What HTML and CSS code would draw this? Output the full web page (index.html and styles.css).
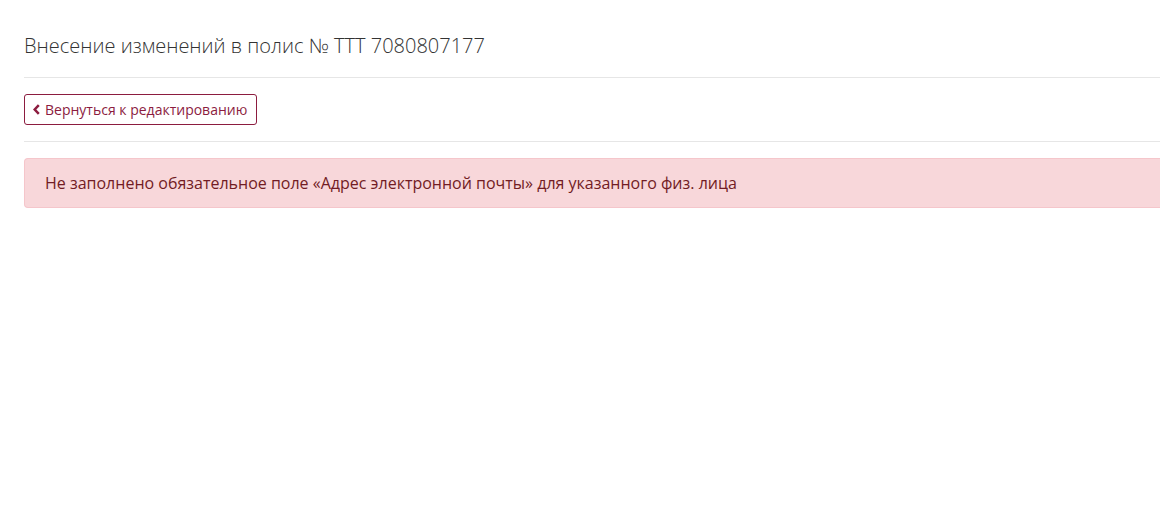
FILE: index.html
```html
<!DOCTYPE html>
<html lang="ru">
<head>
<meta charset="utf-8">
<title>Внесение изменений</title>
<link rel="stylesheet" href="styles.css">
</head>
<body>
<div class="page">
  <h1 class="title">Внесение изменений в полис № ТТТ 7080807177</h1>
  <div class="toolbar">
    <a class="btn-back" href="#">
      <svg class="chev" width="7" height="11" viewBox="0 0 7 11" aria-hidden="true"><path d="M5.8 1.2 L1.7 5.5 L5.8 9.8" fill="none" stroke="currentColor" stroke-width="2.5"/></svg>
      Вернуться к редактированию
    </a>
  </div>
  <div class="alert">Не заполнено обязательное поле «Адрес электронной почты» для указанного физ. лица</div>
</div>
</body>
</html>
```
FILE: styles.css
```css
html, body {
  margin: 0;
  padding: 0;
  background: #fff;
}
body {
  font-family: "Open Sans", "Liberation Sans", sans-serif;
  color: #333;
}
.page {
  padding: 0 0 0 24px;
}
.title {
  margin: 0;
  padding: 32px 0 0;
  height: 45px;
  font-size: 20px;
  font-weight: 300;
  line-height: 28px;
  color: #333;
  border-bottom: 1px solid #e6e6e6;
}
.toolbar {
  padding: 16px 0 16px;
  border-bottom: 1px solid #e6e6e6;
}
.btn-back {
  display: inline-flex;
  align-items: center;
  gap: 5px;
  height: 29px;
  padding: 0 9px 0 8px;
  border: 1px solid #8c1c3f;
  border-radius: 3px;
  color: #8c1c3f;
  font-size: 14px;
  text-decoration: none;
}
.chev {
  display: block;
}
.alert {
  margin-top: 16px;
  padding: 12px 20px;
  border: 1px solid #f5c6cb;
  border-right: none;
  border-radius: 4px 0 0 4px;
  background: #f8d7da;
  color: #721c24;
  font-size: 16px;
  line-height: 24px;
}
```
